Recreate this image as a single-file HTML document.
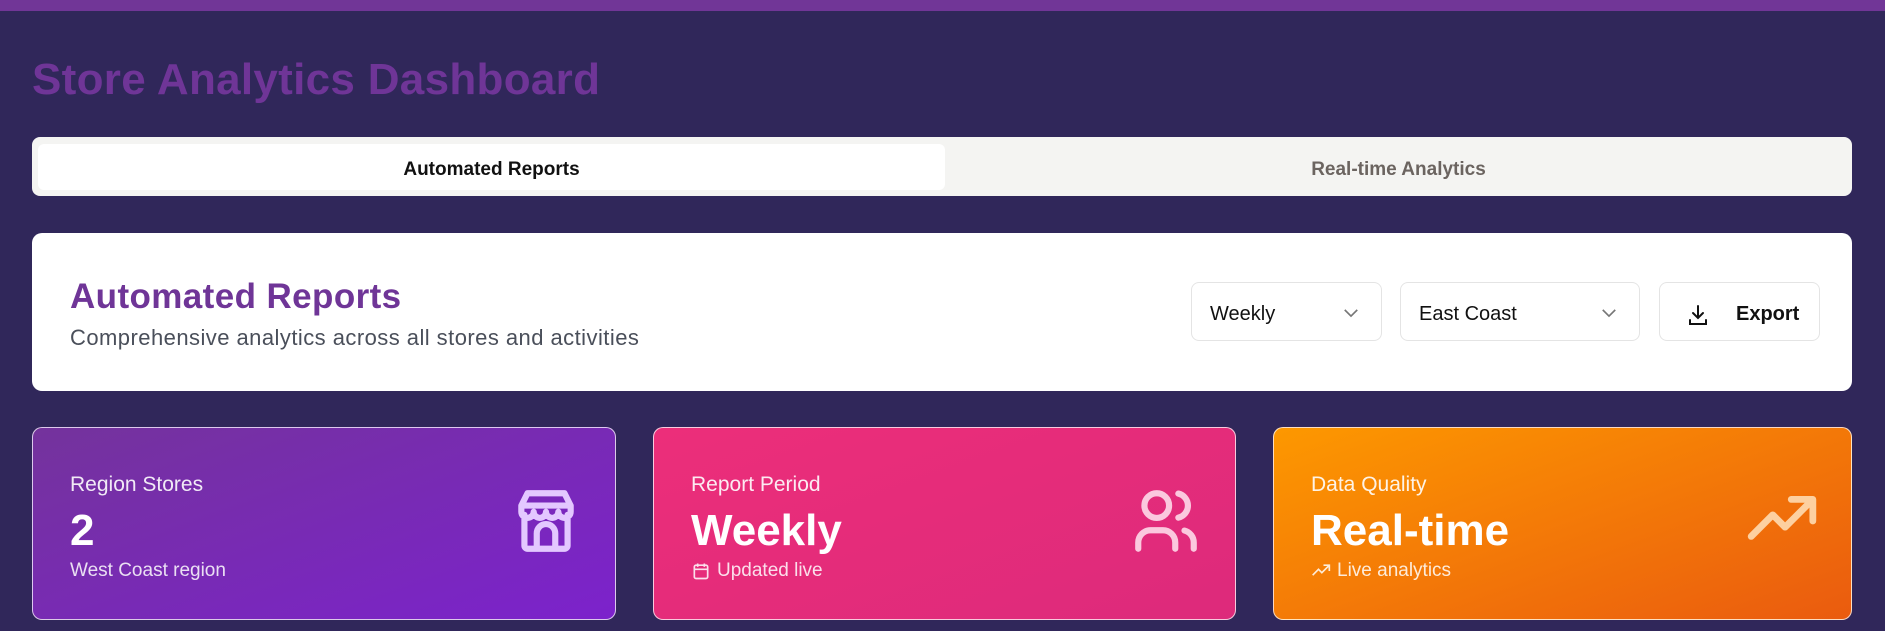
<!DOCTYPE html>
<html><head><meta charset="utf-8"><style>
*{box-sizing:border-box;margin:0;padding:0}
body{width:1885px;height:631px;overflow:hidden;background:#30275a;font-family:"Liberation Sans",sans-serif;position:relative}
.top{position:absolute;left:0;top:0;width:1885px;height:11px;background:#713697}
h1{position:absolute;left:32px;top:55px;font-size:44px;font-weight:bold;color:#6f3597;letter-spacing:0.3px}
.tabs{position:absolute;left:32px;top:137px;width:1820px;height:59px;background:#f4f4f2;border-radius:8px}
.tab{position:absolute;top:7px;height:46px;width:907px;display:flex;align-items:center;justify-content:center;font-size:19px;font-weight:bold;padding-top:6px}
.t1{left:6px;background:#fff;border-radius:6px;color:#111}
.t2{left:913px;color:#6b6460}
.rep{position:absolute;left:32px;top:233px;width:1820px;height:158px;background:#fff;border-radius:10px}
.rep h2{position:absolute;left:38px;top:44px;font-size:35px;color:#6f3597;font-weight:bold;letter-spacing:0.4px}
.rep p{position:absolute;left:38px;top:92px;font-size:22px;color:#4a4f5a;letter-spacing:0.45px}
.sel{position:absolute;top:49px;height:59px;border:1px solid #e4e4e4;border-radius:8px;display:flex;align-items:center;padding:6px 18px 0;font-size:20px;color:#111}
.sel svg{position:absolute;right:20px;top:20px}
.card{position:absolute;top:427px;height:193px;border:1px solid rgba(255,255,255,.75);border-radius:10px;color:#fff}
.card .l{position:absolute;left:37px;top:45px;font-size:21px;opacity:.9}
.card .v{position:absolute;left:37px;top:78px;font-size:44px;font-weight:bold}
.card .s{position:absolute;left:37px;top:132px;font-size:19px;opacity:.85;display:flex;align-items:center;gap:6px}
.card .ic{position:absolute;right:32px;top:56px}
</style></head><body>
<div class="top"></div>
<h1>Store Analytics Dashboard</h1>
<div class="tabs"><div class="tab t1">Automated Reports</div><div class="tab t2">Real-time Analytics</div></div>
<div class="rep">
<h2>Automated Reports</h2>
<p>Comprehensive analytics across all stores and activities</p>
<div class="sel" style="left:1159px;width:191px">Weekly<svg width="20" height="20" viewBox="0 0 16 16"><path d="M3 5.5l5 5 5-5" fill="none" stroke="#777" stroke-width="1.3"/></svg></div>
<div class="sel" style="left:1368px;width:240px">East Coast<svg width="20" height="20" viewBox="0 0 16 16"><path d="M3 5.5l5 5 5-5" fill="none" stroke="#777" stroke-width="1.3"/></svg></div>
<div class="sel" style="left:1627px;width:161px;font-weight:bold;padding-left:26px"><svg style="position:static;margin-right:26px" width="24" height="24" viewBox="0 0 24 24" fill="none" stroke="#111" stroke-width="2" stroke-linecap="round"><path d="M12 3v12M7 10l5 5 5-5M4 17v4h16v-4"/></svg>Export</div>
</div>
<div class="card" style="left:32px;width:584px;background:linear-gradient(160deg,#74339c,#7c22cc)">
<div class="l">Region Stores</div><div class="v">2</div><div class="s">West Coast region</div>
<svg class="ic" width="74" height="74" viewBox="0 0 24 24" fill="none" stroke="#e3c8ff" stroke-width="2" stroke-linecap="round" stroke-linejoin="round"><path d="M4 7l2-4h12l2 4zM4 7v2a2 2 0 0 0 4 0 2 2 0 0 0 4 0 2 2 0 0 0 4 0 2 2 0 0 0 4 0V7M5 10v10a1 1 0 0 0 1 1h12a1 1 0 0 0 1-1V10M9 21v-5a3 3 0 0 1 6 0v5"/></svg>
</div>
<div class="card" style="left:653px;width:583px;background:linear-gradient(160deg,#ec2e7a,#dd2a7b)">
<div class="l">Report Period</div><div class="v">Weekly</div><div class="s"><svg width="20" height="20" viewBox="0 0 24 24" fill="none" stroke="#fff" stroke-width="2"><rect x="4" y="5" width="16" height="16" rx="2"/><path d="M8 3v4M16 3v4M4 10h16"/></svg>Updated live</div>
<svg class="ic" width="74" height="74" viewBox="0 0 24 24" fill="none" stroke="#fbc8de" stroke-width="2" stroke-linecap="round"><circle cx="9" cy="7" r="4"/><path d="M3 21v-2a4 4 0 0 1 4-4h4a4 4 0 0 1 4 4v2M16 3.1a4 4 0 0 1 0 7.8M21 21v-2a4 4 0 0 0-3-3.9"/></svg>
</div>
<div class="card" style="left:1273px;width:579px;background:linear-gradient(160deg,#fd9800,#ea5b0f)">
<div class="l">Data Quality</div><div class="v">Real-time</div><div class="s"><svg width="20" height="20" viewBox="0 0 24 24" fill="none" stroke="#fff" stroke-width="2"><path d="M2 17l7-7 4 4 9-9M15 5h7v7"/></svg>Live analytics</div>
<svg class="ic" width="74" height="74" viewBox="0 0 24 24" fill="none" stroke="#fdd0a0" stroke-width="2.2" stroke-linecap="round" stroke-linejoin="round"><path d="M2 17l7-7 4 4 9-9M15 5h7v7"/></svg>
</div>
</body></html>
